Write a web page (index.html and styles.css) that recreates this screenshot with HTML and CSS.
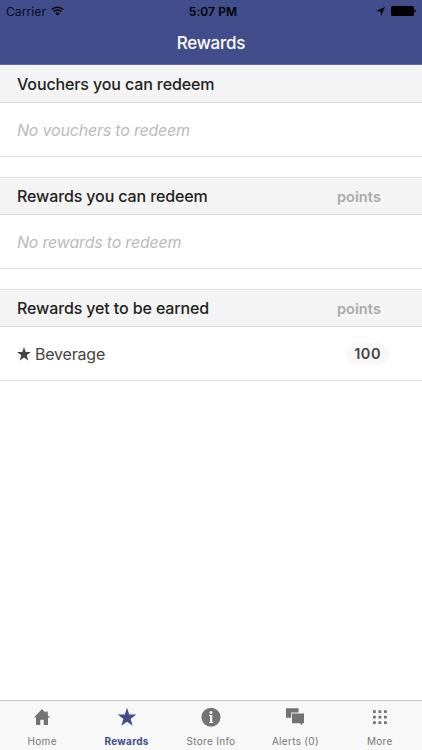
FILE: index.html
```
<!DOCTYPE html>
<html lang="en">
<head>
    <meta charset="UTF-8">
    <meta name="viewport" content="width=device-width, initial-scale=1.0">
    <title>Rewards</title>
    <link rel="stylesheet" href="styles.css">
</head>
<body>
    <header class="header">
        <div class="status">
            <div class="carrier">
                <span>Carrier</span>
                <svg width="13" height="10" viewBox="0 0 13 10">
                    <path d="M.8 3.5a8.2 8.2 0 0 1 11.4 0M2.8 5.6a5.3 5.3 0 0 1 7.4 0" fill="none" stroke="#000" stroke-width="1.5"/>
                    <path d="M6.5 9.6 4.4 7.4a3 3 0 0 1 4.2 0z"/>
                </svg>
            </div>
            <div class="time">5:07 PM</div>
            <div class="battery">
                <svg width="9" height="9" viewBox="0 0 9 9"><path d="M9 0 5 9 4.5 4.6 0 4z"/></svg>
                <svg width="25" height="10" viewBox="0 0 25 10"><rect width="23" height="10" rx="1.5"/><path d="M23.6 3.3q1.4.3 1.4 1.7t-1.4 1.7z"/></svg>
            </div>
        </div>
        <h1>Rewards</h1>
    </header>

    <main>
        <section>
            <div class="sectionHeader first">
                <h2>Vouchers you can redeem</h2>
            </div>
            <div class="row"><em>No vouchers to redeem</em></div>
        </section>
        <section>
            <div class="sectionHeader">
                <h2>Rewards you can redeem</h2>
                <span class="points">points</span>
            </div>
            <div class="row"><em>No rewards to redeem</em></div>
        </section>
        <section>
            <div class="sectionHeader">
                <h2>Rewards yet to be earned</h2>
                <span class="points">points</span>
            </div>
            <div class="row">
                <svg class="star" width="14" height="14" viewBox="0 0 20 20"><path d="m10 0 2.4 7.2 7.6.1-6.1 4.6 2.3 7.5-6.2-4.5-6.2 4.5 2.3-7.5L0 7.3l7.6-.1z"/></svg>
                <span>Beverage</span>
                <span class="badge">100</span>
            </div>
        </section>
    </main>

    <nav class="tabs">
        <a class="tab">
            <svg width="20" height="20" viewBox="0 0 20 20"><path d="M10 2 2 10.5h2V18h4.3v-5.3h3.4V18H16v-7.5h2l-2.200-2.300V4.400h-2.300v1.300z"/></svg>
            <span>Home</span>
        </a>
        <a class="tab active">
            <svg width="20" height="20" viewBox="0 0 20 20"><path d="m10 .8 2.2 6.700 7.100.1-5.700 4.300 2.100 6.900-5.700-4.100-5.700 4.100 2.100-6.900L.7 7.600l7.100-.1z"/></svg>
            <span>Rewards</span>
        </a>
        <a class="tab">
            <svg width="20" height="20" viewBox="0 0 20 20">
                <circle cx="10" cy="10.2" r="9.5"/>
                <g fill="#f8f8f8"><circle cx="10" cy="5.5" r="1.5"/><path d="M8 8h3.3v7h1v.9H8V15h1V8.900H8z"/></g>
            </svg>
            <span>Store Info</span>
        </a>
        <a class="tab">
            <svg width="20" height="20" viewBox="0 0 20 20"><path d="M1 1.300h12.500v4.300H6.200v5.200H1z"/><path d="M7 6.400h12v9.800h-1.800v2.400l-2.400-2.400H7z"/></svg>
            <span>Alerts (0)</span>
        </a>
        <a class="tab">
            <svg width="20" height="20" viewBox="0 0 20 20"><path d="M3 3.300h2.800v2.800H3zM8.500 3.300h2.800v2.800H8.500zM14 3.300h2.800v2.800H14zM3 8.800h2.800v2.800H3zM8.500 8.800h2.800v2.800H8.500zM14 8.800h2.800v2.800H14zM3 14.300h2.800v2.800H3zM8.500 14.300h2.800v2.800H8.500zM14 14.300h2.800v2.800H14z"/></svg>
            <span>More</span>
        </a>
    </nav>
</body>
</html>
```

FILE: styles.css
```
* {
    box-sizing: border-box;
}
body {
    margin: 0;
    height: 100vh;
    display: flex;
    flex-direction: column;
    font-family: Inter, "Liberation Sans", sans-serif;
    background: #fff;
    color: #444;
}
svg {
    display: block;
    flex: none;
}
h1, h2 {
    margin: 0;
    font-weight: 500;
    white-space: nowrap;
}
.header {
    height: 65px;
    background: #424d8b;
    border-bottom: 1px solid #5f699e;
}
.status {
    display: grid;
    grid-template-columns: 1fr auto 1fr;
    align-items: center;
    height: 22px;
    padding: 0 6px;
    font-size: 12px;
    color: #080a20;
}
.carrier, .battery {
    display: flex;
    align-items: center;
}
.carrier {
    gap: 5px;
    letter-spacing: 0.1px;
}
.time {
    padding-left: 4px;
    font-weight: 600;
    letter-spacing: 0.1px;
    color: #000;
}
.battery {
    justify-content: flex-end;
    gap: 6px;
}
h1 {
    text-align: center;
    font-size: 17px;
    line-height: 43px;
    letter-spacing: -0.25px;
    color: #fff;
}
main {
    flex: 1;
}
section {
    margin-bottom: 20px;
}
.sectionHeader {
    display: flex;
    align-items: center;
    justify-content: space-between;
    height: 38px;
    padding: 0 41px 0 17px;
    background: #f4f4f4;
    border-top: 1px solid #e0e0e0;
    border-bottom: 1px solid #dcdcdc;
}
.sectionHeader.first {
    border-top-color: #f4f4f4;
}
h2 {
    font-size: 16px;
    font-weight: 450;
    letter-spacing: -0.12px;
    color: #222;
}
.points {
    font-size: 14.5px;
    font-weight: 600;
    letter-spacing: 0.1px;
    color: #aaa;
}
.row {
    display: flex;
    align-items: center;
    height: 54px;
    padding: 0 33px 0 17px;
    border-bottom: 1px solid #dcdcdc;
    font-size: 16px;
    letter-spacing: -0.2px;
}
em {
    color: #bbb;
}
.star {
    fill: #444;
    margin-right: 4px;
}
.badge {
    margin-left: auto;
    padding: 0 8px;
    border-radius: 11px;
    background: #f8f8f8;
    font-size: 14.5px;
    font-weight: 600;
    line-height: 22px;
    letter-spacing: 0.5px;
}
.tabs {
    display: grid;
    grid-template-columns: repeat(5, 1fr);
    height: 50px;
    background: #f8f8f8;
    border-top: 1px solid #c0c0c0;
}
.tab {
    display: flex;
    flex-direction: column;
    align-items: center;
    padding-top: 6px;
    font-size: 10px;
    line-height: 12px;
    letter-spacing: 0.3px;
    color: #777;
    white-space: nowrap;
}
.tab svg {
    margin-bottom: 8px;
    fill: #737373;
}
.tab.active {
    font-weight: 700;
    color: #424d8b;
}
.tab.active svg {
    fill: #424d8b;
}
```
